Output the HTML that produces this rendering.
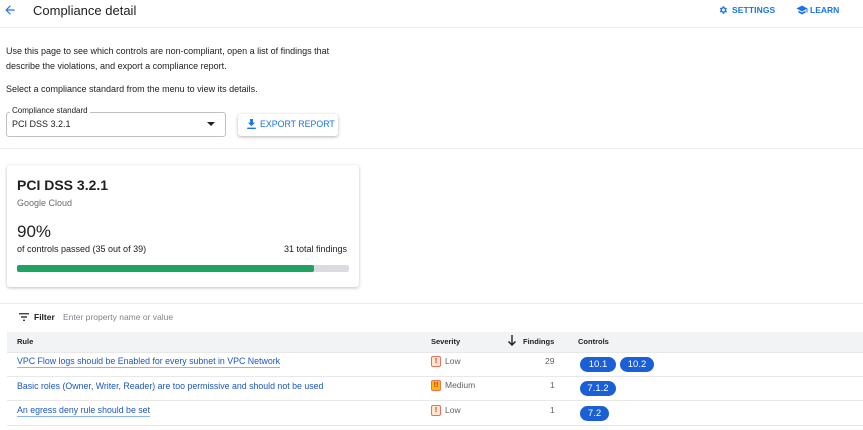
<!DOCTYPE html>
<html><head><meta charset="utf-8"><style>
*{margin:0;padding:0;box-sizing:border-box}
body{width:863px;height:430px;overflow:hidden;background:#fff;font-family:"Liberation Sans",sans-serif;color:#202124;position:relative}
.a{position:absolute;white-space:nowrap}
.hr{position:absolute;left:0;width:863px;height:1px;background:#ebebeb}
.blue{color:#1a73e8}
.pill{position:absolute;height:15px;border-radius:8px;background:#1a5fd6;color:#fff;font-size:9.5px;line-height:15px;text-align:center}
.sev{position:absolute;width:10px;height:11px;border:1px solid #e8715c;border-radius:2px;font-size:7px;line-height:9px;text-align:center;color:#c5221f;font-weight:bold}
.link{position:absolute;font-size:8.8px;color:#1a56c8;border-bottom:1px solid #8ab4f8;line-height:11px;white-space:nowrap}
.row{position:absolute;left:7px;width:856px;height:1px;background:#e8e8e8}
</style></head><body>
<svg class="a" style="left:3px;top:3px" width="14" height="14" viewBox="0 0 24 24"><path d="M20 11H7.8l5.6-5.6L12 4l-8 8 8 8 1.4-1.4L7.8 13H20z" fill="#1a73e8"/></svg>
<div class="a" style="left:33px;top:3px;font-size:13px">Compliance detail</div>
<svg class="a" style="left:718px;top:5px" width="10" height="10" viewBox="0 0 24 24"><path fill="#1a73e8" d="M19.4 13a7.6 7.6 0 0 0 0-2l2.1-1.6-2-3.5-2.5 1a7.3 7.3 0 0 0-1.7-1L15 3h-4l-.4 2.9a7.3 7.3 0 0 0-1.7 1l-2.5-1-2 3.5L6.6 11a7.6 7.6 0 0 0 0 2l-2.1 1.6 2 3.5 2.5-1a7.3 7.3 0 0 0 1.7 1L11 21h4l.4-2.9a7.3 7.3 0 0 0 1.7-1l2.5 1 2-3.5zM13 15.5a3.5 3.5 0 1 1 0-7 3.5 3.5 0 0 1 0 7z"/></svg>
<div class="a blue" style="left:732px;top:5px;font-size:8.5px;font-weight:bold;letter-spacing:.1px">SETTINGS</div>
<svg class="a" style="left:796px;top:5px" width="12" height="10" viewBox="0 0 24 20"><path fill="#1a73e8" d="M5 11.2v4L12 19l7-3.8v-4L12 15zM12 1 1 7l11 6 9-4.9V15h2V7z"/></svg>
<div class="a blue" style="left:810px;top:5px;font-size:8.5px;font-weight:bold">LEARN</div>
<div class="hr" style="top:27px"></div>
<div class="a" style="left:6px;top:44px;font-size:9px;line-height:14.5px">Use this page to see which controls are non-compliant, open a list of findings that<br>describe the violations, and export a compliance report.</div>
<div class="a" style="left:6px;top:84px;font-size:9px">Select a compliance standard from the menu to view its details.</div>
<div class="a" style="left:6px;top:112px;width:220px;height:25px;border:1px solid #bdc1c6;border-radius:3px"></div>
<div class="a" style="left:10px;top:106px;font-size:8px;background:#fff;padding:0 2px">Compliance standard</div>
<div class="a" style="left:12px;top:119px;font-size:9px">PCI DSS 3.2.1</div>
<div class="a" style="left:207px;top:122px;width:0;height:0;border-left:4px solid transparent;border-right:4px solid transparent;border-top:4px solid #202124"></div>
<div class="a" style="left:238px;top:114px;width:100px;height:22px;border-radius:3px;box-shadow:0 1px 3px rgba(0,0,0,.3);background:#fff"></div>
<svg class="a" style="left:247px;top:119px" width="9" height="10" viewBox="0 0 12 14"><path fill="#1a73e8" d="M4 0h4v5h3L6 10 1 5h3zM0 12h12v2H0z"/></svg>
<div class="a blue" style="left:260px;top:119px;font-size:8.8px">EXPORT REPORT</div>
<div class="hr" style="top:148px"></div>
<div class="a" style="left:7px;top:165px;width:352px;height:122px;border-radius:3px;box-shadow:0 1px 3px rgba(0,0,0,.25);background:#fff"></div>
<div class="a" style="left:17px;top:177px;font-size:14px;font-weight:bold">PCI DSS 3.2.1</div>
<div class="a" style="left:17px;top:198px;font-size:9px;color:#6b6b6b">Google Cloud</div>
<div class="a" style="left:17px;top:222px;font-size:17px">90%</div>
<div class="a" style="left:17px;top:244px;font-size:9px">of controls passed (35 out of 39)</div>
<div class="a" style="left:284px;top:244px;font-size:9px">31 total findings</div>
<div class="a" style="left:17px;top:265px;width:332px;height:7px;background:#dadce0;border-radius:2px"></div>
<div class="a" style="left:17px;top:265px;width:297px;height:7px;background:#1ea362;border-radius:2px"></div>
<div class="hr" style="top:303px"></div>
<svg class="a" style="left:19px;top:313px" width="10" height="8" viewBox="0 0 10 8"><path d="M0 0h10v1.4H0zM2 3.3h6v1.4H2zM4 6.6h2V8H4z" fill="#3c4043"/></svg>
<div class="a" style="left:34px;top:312px;font-size:8.5px;font-weight:bold">Filter</div>
<div class="a" style="left:63px;top:312px;font-size:8.5px;color:#80868b">Enter property name or value</div>
<div class="a" style="left:7px;top:332px;width:856px;height:20px;background:#f1f3f4"></div>
<div class="a" style="left:17px;top:337px;font-size:7.5px;font-weight:bold">Rule</div>
<div class="a" style="left:431px;top:337px;font-size:7.5px;font-weight:bold">Severity</div>
<svg class="a" style="left:508px;top:335px" width="8" height="11" viewBox="0 0 8 11"><path d="M3.3 0h1.4v8.2L7 6l1 1-4 4-4-4 1-1 2.3 2.2z" fill="#202124"/></svg>
<div class="a" style="left:523px;top:337px;font-size:7.5px;font-weight:bold">Findings</div>
<div class="a" style="left:578px;top:337px;font-size:7.5px;font-weight:bold">Controls</div>
<div class="row" style="top:352px"></div>
<div class="row" style="top:376px"></div>
<div class="row" style="top:400px"></div>
<div class="row" style="top:425px"></div>
<div class="link" style="left:17px;top:356px">VPC Flow logs should be Enabled for every subnet in VPC Network</div>
<div class="link" style="left:17px;top:381px;border-bottom:none">Basic roles (Owner, Writer, Reader) are too permissive and should not be used</div>
<div class="link" style="left:17px;top:405px">An egress deny rule should be set</div>
<div class="sev" style="left:431px;top:356px;background:#fde8d0">!</div>
<div class="a" style="left:445px;top:356px;font-size:8.5px;color:#5f6368">Low</div>
<div class="sev" style="left:431px;top:380px;background:#fbbc04">!!</div>
<div class="a" style="left:445px;top:380px;font-size:8.5px;color:#5f6368">Medium</div>
<div class="sev" style="left:431px;top:405px;background:#fde8d0">!</div>
<div class="a" style="left:445px;top:405px;font-size:8.5px;color:#5f6368">Low</div>
<div class="a" style="left:545px;top:356px;font-size:8.5px;color:#5f6368">29</div>
<div class="a" style="left:550px;top:380px;font-size:8.5px;color:#5f6368">1</div>
<div class="a" style="left:550px;top:405px;font-size:8.5px;color:#5f6368">1</div>
<div class="pill" style="left:580px;top:357px;width:36px">10.1</div>
<div class="pill" style="left:620px;top:357px;width:34px">10.2</div>
<div class="pill" style="left:580px;top:381px;width:36px">7.1.2</div>
<div class="pill" style="left:580px;top:406px;width:29px">7.2</div>
</body></html>
